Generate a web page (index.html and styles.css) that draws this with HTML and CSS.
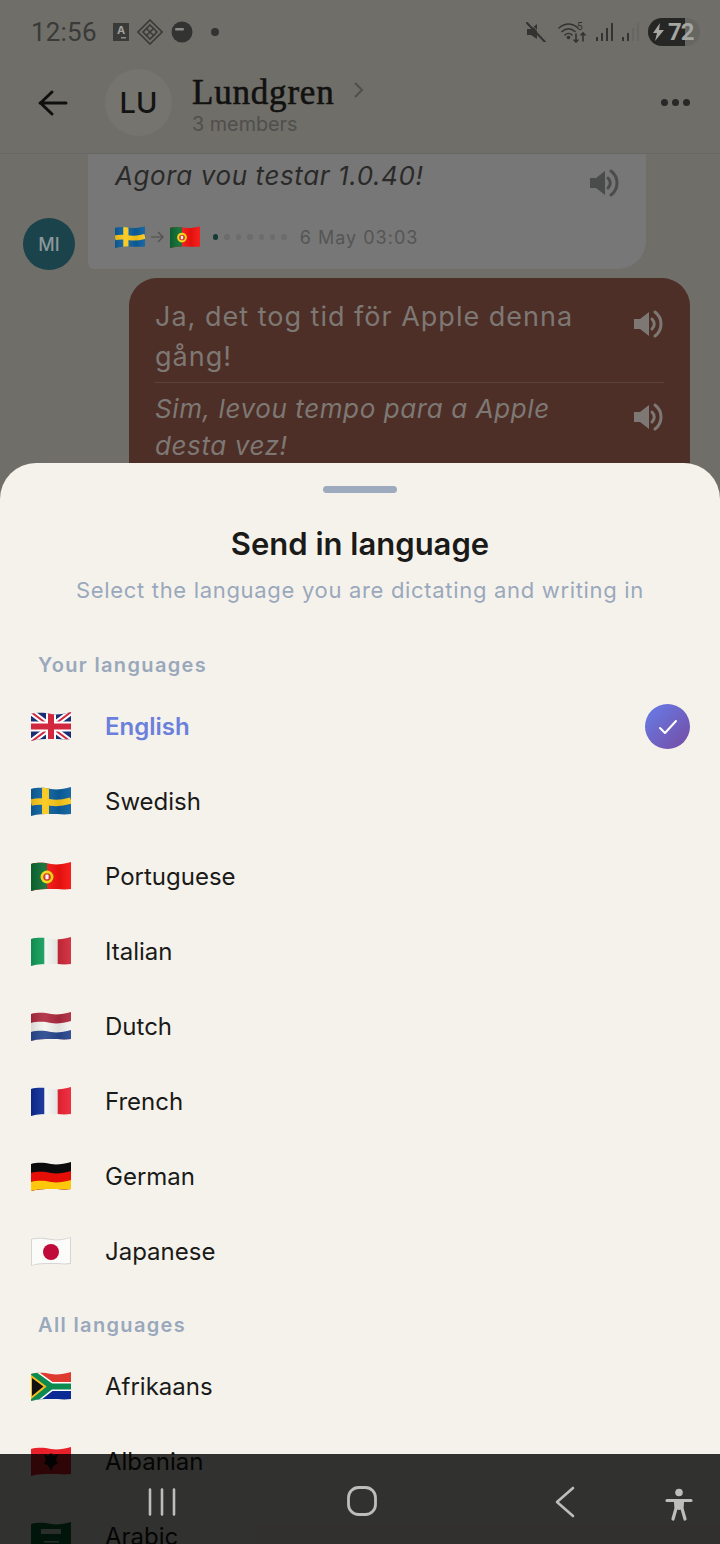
FILE: index.html
```html
<!DOCTYPE html>
<html lang="en">
<head>
  <meta charset="UTF-8">
  <meta name="viewport" content="width=device-width, initial-scale=1.0">
  <title>Send in language</title>
  <link rel="stylesheet" href="styles.css">
</head>
<body>
  <svg class="defs" width="0" height="0">
    <defs>
      <clipPath id="wave"><path d="M0 2C8 0 14 1 20 2S33 2 40 0V27C33 28 27 27 20 27S7 27 0 29Z"/></clipPath>
      <linearGradient id="shade" x1="0" y1="0" x2="1" y2="0">
        <stop offset="0" stop-color="#000" stop-opacity=".12"/>
        <stop offset=".35" stop-color="#fff" stop-opacity=".08"/>
        <stop offset=".7" stop-color="#000" stop-opacity=".08"/>
        <stop offset="1" stop-color="#fff" stop-opacity=".06"/>
      </linearGradient>
      <symbol id="speaker" viewBox="0 0 32 32">
        <path d="M2 11h6l9-7v24l-9-7H2z" fill="currentColor"/>
        <path d="M20 11c3 3 3 7 0 10M23 4c8 6 8 18 0 24" fill="none" stroke="currentColor" stroke-width="3" stroke-linecap="round"/>
      </symbol>
      <symbol id="se" viewBox="0 0 40 30"><g clip-path="url(#wave)"><rect width="40" height="30" fill="#0b5f9e"/><rect x="11" width="7" height="30" fill="#fcc817"/><path d="M0 15.500C8 13.500 14 14.500 20 15.500S33 15.500 40 13.500" fill="none" stroke="#fcc817" stroke-width="6.500"/><rect width="40" height="30" fill="url(#shade)"/></g></symbol>
      <symbol id="pt" viewBox="0 0 40 30"><g clip-path="url(#wave)"><rect width="40" height="30" fill="#f5120f"/><rect width="16" height="30" fill="#0a6a30"/><circle cx="16" cy="15" r="6.500" fill="#f5d90a"/><circle cx="16" cy="15" r="3.800" fill="#d8281f"/><rect x="14.400" y="12.600" width="3.200" height="4.600" rx="1" fill="#f4f4f4"/><rect width="40" height="30" fill="url(#shade)"/></g></symbol>
    </defs>
  </svg>

  <div class="phone">
    <div class="status-bar">
      <div class="status-left">
        <span class="clock">12:56</span>
        <svg class="st-icon" width="16" height="18" viewBox="0 0 16 18"><rect width="16" height="18" fill="#3a3a38"/><text x="8" y="11" class="st-a">A</text><rect x="8" y="14" width="5" height="1.500" fill="#8a8a86"/></svg>
        <svg class="st-icon" width="26" height="26" viewBox="0 0 26 26" fill="none" stroke="#3a3a38" stroke-width="1.600"><path d="M13 1l12 12-12 12L1 13z"/><path d="M13 6l7 7-7 7-7-7z"/><path d="M9 9l8 8M17 9l-8 8"/></svg>
        <svg class="st-icon" width="22" height="22" viewBox="0 0 22 22"><circle cx="11" cy="11" r="10.500" fill="#333331"/><rect x="4" y="7" width="9" height="2.400" rx="1.200" fill="#8a8a86"/></svg>
        <span class="st-dot"></span>
      </div>
      <div class="status-right">
        <svg width="20" height="20" viewBox="0 0 20 20"><path d="M1 7h4l6-5v15l-6-4H1z" fill="#333331"/><path d="M1 1l18 19" stroke="#333331" stroke-width="2" stroke-linecap="round"/><path d="M1 1l18 19" stroke="#6f6e69" stroke-width="1" transform="translate(2 -1)"/></svg>
        <svg class="st-wifi" width="30" height="22" viewBox="0 0 30 22" fill="none" stroke="#333331" stroke-width="1.600" stroke-linecap="round">
          <path d="M1 7c6-5 13-5 19 0M4 10.500c4-3.500 9-3.500 13 0M7 14c2-2 5-2 7 0"/>
          <circle cx="10.500" cy="16.500" r="1" fill="#333331"/>
          <path d="M18 13v8M16 19l2 2 2-2M25 20v-8M23 14l2-2 2 2"/>
          <text x="19" y="9" class="st-five">5</text>
        </svg>
        <svg width="18" height="20" viewBox="0 0 18 20"><rect x="0" y="15" width="2" height="4" fill="#333331"/><rect x="5" y="11" width="2" height="8" fill="#333331"/><rect x="10" y="6" width="2" height="13" fill="#333331"/><rect x="15" y="1" width="2" height="18" fill="#333331"/></svg>
        <svg width="18" height="20" viewBox="0 0 18 20"><rect x="0" y="15" width="2" height="4" fill="#333331"/><rect x="5" y="11" width="2" height="8" fill="#333331"/><rect x="10" y="6" width="2" height="13" fill="#666663"/><rect x="15" y="1" width="2" height="18" fill="#666663"/></svg>
        <div class="battery">
          <div class="battery-fill"></div>
          <svg class="bolt" width="12" height="18" viewBox="0 0 12 18"><path d="M7 0L0 10h4l-2 8 9-11H6z" fill="#a5a5a1"/></svg>
          <span class="battery-num">72</span>
        </div>
      </div>
    </div>

    <header class="chat-header">
      <svg class="back" width="32" height="32" viewBox="0 0 32 32" fill="none" stroke="#0f0f0e" stroke-width="3" stroke-linecap="round" stroke-linejoin="round"><path d="M29 16H3M15 5L3.500 16 15 27"/></svg>
      <div class="avatar-lu">LU</div>
      <div class="chat-title">
        <div class="chat-name">Lundgren <svg class="chev" width="10" height="16" viewBox="0 0 10 16" fill="none" stroke="#4f4f4c" stroke-width="2"><path d="M1 1l7 7-7 7"/></svg></div>
        <div class="chat-sub">3 members</div>
      </div>
      <div class="more"><span></span><span></span><span></span></div>
    </header>

    <main class="chat">
      <div class="msg-in">
        <div class="avatar-mi">MI</div>
        <div class="bubble-in">
          <div class="line">
            <p class="it-in">Agora vou testar 1.0.40!</p>
            <svg class="speak speak-in"><use href="#speaker"/></svg>
          </div>
          <div class="meta">
            <svg width="30" height="23"><use href="#se"/></svg>
            <svg class="meta-arrow" width="13" height="12" viewBox="0 0 13 12" fill="none" stroke="#4f4f4d" stroke-width="1.200"><path d="M0 6h12M7 1l5 5-5 5"/></svg>
            <svg width="30" height="23"><use href="#pt"/></svg>
            <div class="dots"><span class="on"></span><span></span><span></span><span></span><span></span><span></span><span></span></div>
            <span class="date">6 May 03:03</span>
          </div>
        </div>
      </div>
      <div class="bubble-out">
        <div class="line">
          <p class="out-text">Ja, det tog tid för Apple denna gång!</p>
          <svg class="speak speak-out"><use href="#speaker"/></svg>
        </div>
        <div class="divider"></div>
        <div class="line">
          <p class="out-it">Sim, levou tempo para a Apple desta vez!</p>
          <svg class="speak speak-out"><use href="#speaker"/></svg>
        </div>
      </div>
    </main>

    <section class="sheet">
      <div class="handle"></div>
      <h2 class="sheet-title">Send in language</h2>
      <p class="sheet-sub">Select the language you are dictating and writing in</p>

      <h3 class="group first">Your languages</h3>
      <ul class="langs">
        <li class="lang active">
          <svg class="flag" viewBox="0 0 40 30"><g clip-path="url(#wave)"><rect width="40" height="30" fill="#1a2f73"/><path d="M0 0L40 30M40 0L0 30" stroke="#fff" stroke-width="6"/><path d="M0 0L40 30M40 0L0 30" stroke="#d2283f" stroke-width="2"/><path d="M20 0V30M0 14.500H40" stroke="#fff" stroke-width="10"/><path d="M20 0V30M0 14.500H40" stroke="#d2283f" stroke-width="6"/></g></svg>
          <span>English</span>
          <div class="check"><svg width="22" height="22" viewBox="0 0 22 22" fill="none" stroke="#fff" stroke-width="2" stroke-linecap="round" stroke-linejoin="round"><path d="M3 12l5 5L19 5"/></svg></div>
        </li>
        <li class="lang"><svg class="flag"><use href="#se"/></svg><span>Swedish</span></li>
        <li class="lang"><svg class="flag"><use href="#pt"/></svg><span>Portuguese</span></li>
        <li class="lang">
          <svg class="flag" viewBox="0 0 40 30"><g clip-path="url(#wave)"><rect width="40" height="30" fill="#f4f4f0"/><rect width="13.300" height="30" fill="#0f9d58"/><rect x="26.700" width="13.300" height="30" fill="#cf2a3a"/><rect width="40" height="30" fill="url(#shade)"/></g></svg>
          <span>Italian</span>
        </li>
        <li class="lang">
          <svg class="flag" viewBox="0 0 40 30"><g clip-path="url(#wave)"><rect width="40" height="30" fill="#ae2b3f"/><path d="M0 11C8 9 14 10 20 11S33 11 40 9V30H0Z" fill="#f4f4f0"/><path d="M0 20C8 18 14 19 20 20S33 20 40 18V30H0Z" fill="#27478f"/><rect width="40" height="30" fill="url(#shade)"/></g></svg>
          <span>Dutch</span>
        </li>
        <li class="lang">
          <svg class="flag" viewBox="0 0 40 30"><g clip-path="url(#wave)"><rect width="40" height="30" fill="#f6f6f4"/><rect width="13.300" height="30" fill="#0a2a97"/><rect x="26.700" width="13.300" height="30" fill="#ee2436"/><rect width="40" height="30" fill="url(#shade)"/></g></svg>
          <span>French</span>
        </li>
        <li class="lang">
          <svg class="flag" viewBox="0 0 40 30"><g clip-path="url(#wave)"><rect width="40" height="30" fill="#0c0c0c"/><path d="M0 11C8 9 14 10 20 11S33 11 40 9V30H0Z" fill="#e50f08"/><path d="M0 20C8 18 14 19 20 20S33 20 40 18V30H0Z" fill="#fdc80b"/></g></svg>
          <span>German</span>
        </li>
        <li class="lang">
          <svg class="flag" viewBox="0 0 40 30"><g clip-path="url(#wave)"><rect width="40" height="30" fill="#d6d6d4"/><path d="M1 2.500C8 1 14 2 20 3S33 3 39 1V26C33 27 27 26 20 26S7 26 1 28Z" fill="#fbfbfa"/><circle cx="20" cy="15" r="8" fill="#bf0a3a"/></g></svg>
          <span>Japanese</span>
        </li>
      </ul>

      <h3 class="group">All languages</h3>
      <ul class="langs">
        <li class="lang">
          <svg class="flag" viewBox="0 0 40 30"><g clip-path="url(#wave)"><rect width="40" height="15" fill="#de3a30"/><rect y="15" width="40" height="15" fill="#0c2a93"/><path d="M0 0L20 14.500H40M0 30L20 14.500" fill="none" stroke="#fff" stroke-width="9"/><path d="M0 0L20 14.500H40M0 30L20 14.500" fill="none" stroke="#0c8a50" stroke-width="6"/><path d="M0 4L14 14.500 0 26z" fill="#111" stroke="#f4bc18" stroke-width="2"/></g></svg>
          <span>Afrikaans</span>
        </li>
        <li class="lang">
          <svg class="flag" viewBox="0 0 40 30"><g clip-path="url(#wave)"><rect width="40" height="30" fill="#e8202a"/><path d="M20 6l3 3 4-2-2 6 2 4-4 1-3 6-3-6-4-1 2-4-2-6 4 2z" fill="#111"/></g></svg>
          <span>Albanian</span>
        </li>
        <li class="lang">
          <svg class="flag" viewBox="0 0 40 30"><g clip-path="url(#wave)"><rect width="40" height="30" fill="#0a6b3b"/><rect x="10" y="7" width="20" height="5" fill="#cfe3d8"/><rect x="13" y="19" width="15" height="1.500" fill="#cfe3d8"/></g></svg>
          <span>Arabic</span>
        </li>
      </ul>
    </section>

    <nav class="nav-bar">
      <svg class="nav-menu" width="30" height="28" viewBox="0 0 30 28" stroke="#bdbdba" stroke-width="2.600" stroke-linecap="round"><path d="M3 1.500v25M15 1.500v25M27 1.500v25"/></svg>
      <svg class="nav-home" width="30" height="30" viewBox="0 0 30 30" fill="none" stroke="#bdbdba" stroke-width="2.800"><rect x="1.500" y="1.500" width="27" height="27" rx="10"/></svg>
      <svg class="nav-back" width="20" height="32" viewBox="0 0 20 32" fill="none" stroke="#bdbdba" stroke-width="2.600" stroke-linecap="round" stroke-linejoin="round"><path d="M18 2L2 16l16 14"/></svg>
      <svg class="nav-access" width="28" height="34" viewBox="0 0 28 34"><circle cx="14" cy="4.500" r="3.800" fill="#bdbdba"/><path d="M2 12.500h24M10.500 13l.5 7.500L8 31M17.500 13l-.5 7.500L20 31" fill="none" stroke="#bdbdba" stroke-width="3.200" stroke-linecap="round"/><path d="M10.500 13h7v8l-3.500 1-3.500-1z" fill="#bdbdba"/></svg>
    </nav>
  </div>
</body>
</html>
```

FILE: styles.css
```css
* {
  box-sizing: border-box;
}
html, body {
  margin: 0;
  padding: 0;
}
body {
  font-family: Inter, "Liberation Sans", sans-serif;
  background-color: #6f6e69;
}
p, h2, h3, ul {
  margin: 0;
  padding: 0;
}
ul {
  list-style: none;
}
.defs {
  position: absolute;
}
.phone {
  position: relative;
  width: 720px;
  height: 1544px;
  overflow: hidden;
  background-color: #6f6e69;
}

/* status bar */
.status-bar {
  height: 64px;
  display: flex;
  align-items: center;
  justify-content: space-between;
  padding: 0 20px 0 31px;
}
.status-left, .status-right {
  display: flex;
  align-items: center;
}
.status-left {
  gap: 8px;
}
.status-right {
  gap: 8px;
}
.clock {
  font-family: Roboto, sans-serif;
  font-size: 26px;
  letter-spacing: .2px;
  color: #3a3a38;
  margin-right: 8px;
}
.st-a {
  font-family: Inter, sans-serif;
  font-size: 11px;
  font-weight: 700;
  fill: #a0a09c;
  text-anchor: middle;
}
.st-five {
  font-family: Roboto, sans-serif;
  font-size: 10px;
  fill: #333331;
  stroke: none;
}
.st-dot {
  width: 8px;
  height: 8px;
  margin-left: 10px;
  border-radius: 50%;
  background: #333331;
}
.st-wifi {
  margin-left: 4px;
}
.battery {
  position: relative;
  width: 52px;
  height: 28px;
  border-radius: 14px;
  background: #666663;
  overflow: hidden;
  display: flex;
  align-items: center;
  padding-left: 5px;
  gap: 3px;
}
.battery-fill {
  position: absolute;
  left: 0;
  top: 0;
  bottom: 0;
  width: 37px;
  background: #262624;
}
.bolt {
  position: relative;
}
.battery-num {
  position: relative;
  font-family: Roboto, sans-serif;
  font-weight: 700;
  font-size: 24px;
  letter-spacing: -1px;
  color: #a5a5a1;
}

/* chat header */
.chat-header {
  height: 90px;
  display: flex;
  align-items: center;
  padding: 0 30px 12px 37px;
  border-bottom: 1px solid #666662;
}
.back {
  flex: none;
}
.avatar-lu {
  width: 67px;
  height: 67px;
  margin-left: 36px;
  border-radius: 50%;
  background: #75746f;
  color: #131312;
  font-size: 29px;
  font-weight: 500;
  display: flex;
  align-items: center;
  justify-content: center;
}
.chat-title {
  margin-left: 20px;
  flex: 1;
  margin-top: 4px;
}
.chat-name {
  font-family: "Liberation Serif", serif;
  font-size: 35px;
  line-height: 38px;
  letter-spacing: .8px;
  -webkit-text-stroke: .6px #111110;
  color: #111110;
}
.chev {
  margin-left: 10px;
  vertical-align: 6px;
}
.chat-sub {
  font-size: 19.800px;
  line-height: 24px;
  color: #4f4f4c;
}
.more {
  display: flex;
  gap: 4px;
}
.more span {
  width: 7px;
  height: 7px;
  border-radius: 50%;
  background: #282827;
}

/* messages behind the sheet */
.chat {
  height: 309px;
  overflow: hidden;
}
.msg-in {
  display: flex;
  align-items: flex-end;
  padding-left: 23px;
}
.avatar-mi {
  width: 52px;
  height: 52px;
  margin-right: 13px;
  margin-bottom: -1px;
  border-radius: 50%;
  background: #1b434b;
  color: #8b9799;
  font-size: 18px;
  font-weight: 500;
  display: flex;
  align-items: center;
  justify-content: center;
}
.bubble-in {
  width: 558px;
  height: 115px;
  padding: 4px 27px 0;
  background: #777777;
  border-radius: 0 0 28px 6px;
}
.line {
  display: flex;
  justify-content: space-between;
}
.it-in {
  font-size: 26px;
  line-height: 36px;
  font-style: italic;
  letter-spacing: .6px;
  color: #2a2a29;
}
.speak {
  flex: none;
  width: 32px;
  height: 32px;
  margin-top: 11px;
}
.speak-in {
  color: #4a4c4b;
  margin-right: -1px;
  margin-top: 9px;
}
.speak-out {
  color: #7e7874;
}
.meta {
  display: flex;
  align-items: center;
  margin-top: 25px;
  height: 26px;
}
.meta-arrow {
  margin: 0 6px;
}
.dots {
  display: flex;
  gap: 6px;
  margin-left: 13px;
}
.dots span {
  width: 5.400px;
  height: 5.400px;
  border-radius: 50%;
  background: #6c6c6c;
}
.dots .on {
  background: #173a34;
}
.date {
  margin-left: 13px;
  font-size: 18px;
  letter-spacing: 1px;
  color: #555554;
}
.bubble-out {
  width: 561px;
  margin: 9px 0 0 129px;
  padding: 19px 26px 0;
  background: #4d2f27;
  border-radius: 28px;
  height: 240px;
}
.out-text {
  width: 440px;
  font-size: 27px;
  line-height: 40px;
  letter-spacing: 1px;
  color: #7e7874;
}
.out-it {
  width: 440px;
  font-size: 26px;
  line-height: 37px;
  font-style: italic;
  letter-spacing: .6px;
  color: #7e7874;
}
.divider {
  height: 1px;
  margin: 5px 0 7px;
  background: #5c443c;
}

/* language sheet */
.sheet {
  position: absolute;
  left: 0;
  right: 0;
  top: 463px;
  bottom: 0;
  padding-top: 23px;
  background: #f5f2ec;
  border-radius: 36px 36px 0 0;
  overflow: hidden;
}
.handle {
  width: 74px;
  height: 7px;
  margin: 0 auto;
  border-radius: 4px;
  background: #9eabbf;
}
.sheet-title {
  margin-top: 31px;
  text-align: center;
  font-size: 31px;
  line-height: 40px;
  font-weight: 600;
  color: #1a1a18;
}
.sheet-sub {
  margin-top: 11px;
  text-align: center;
  font-size: 22px;
  line-height: 30px;
  letter-spacing: .68px;
  color: #9aa8bc;
}
.group {
  margin: 21px 0 0 38px;
  font-size: 20px;
  line-height: 30px;
  font-weight: 600;
  letter-spacing: 1.35px;
  color: #9aa8bc;
}
.group.first {
  margin-top: 45px;
}
.langs {
  margin-top: 9px;
}
.lang {
  height: 75px;
  display: flex;
  align-items: center;
  padding: 0 30px 0 31px;
  font-size: 24px;
  color: #1a1a18;
}
.flag {
  flex: none;
  width: 40px;
  height: 30px;
  margin-right: 34px;
}
.lang.active {
  font-weight: 600;
  color: #6b7fdc;
}
.check {
  margin-left: auto;
  width: 45px;
  height: 45px;
  border-radius: 50%;
  background: linear-gradient(135deg, #667eea, #764ba2);
  display: flex;
  align-items: center;
  justify-content: center;
}

/* system nav over the list */
.nav-bar {
  position: absolute;
  left: 0;
  right: 0;
  bottom: 0;
  height: 90px;
  background: rgba(0, 0, 0, 0.8);
}
.nav-bar svg {
  position: absolute;
}
.nav-menu {
  left: 147px;
  top: 34px;
}
.nav-home {
  left: 347px;
  top: 32px;
}
.nav-back {
  left: 555px;
  top: 32px;
}
.nav-access {
  left: 665px;
  top: 34px;
}
```
